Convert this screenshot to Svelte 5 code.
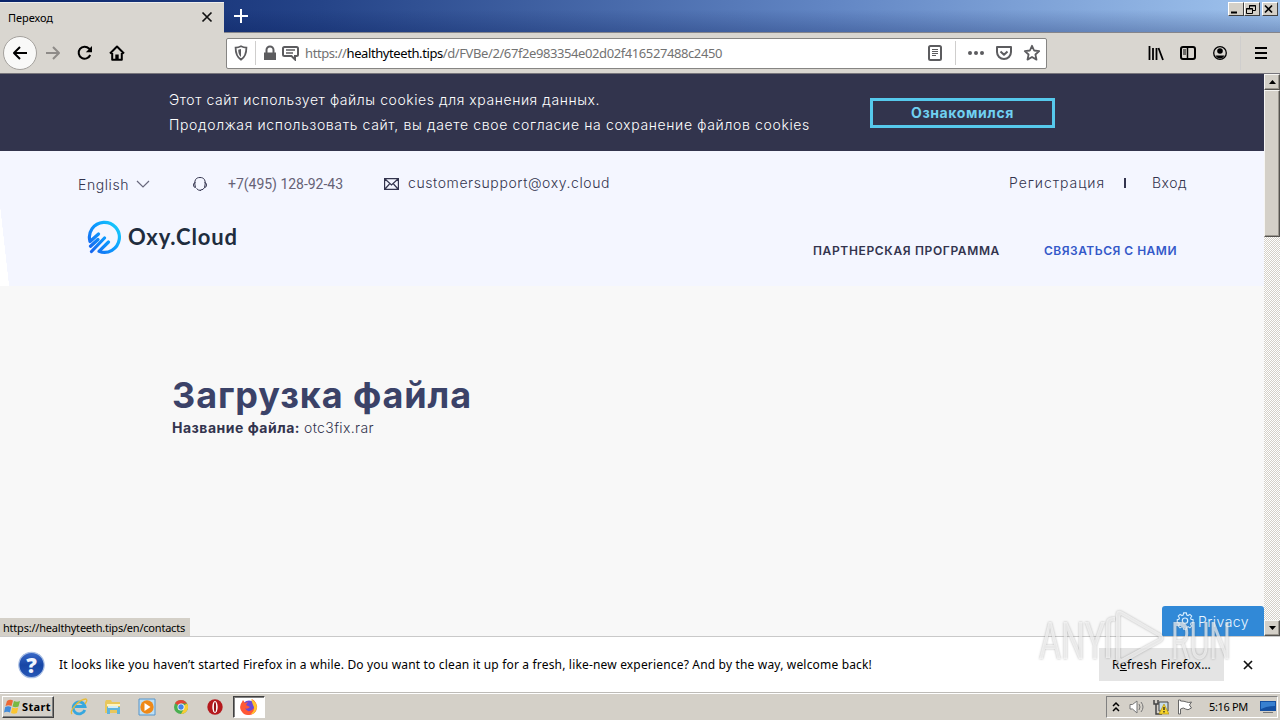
<script lang="ts">
	const url = {
		scheme: 'https://',
		host: 'healthyteeth.tips',
		path: '/d/FVBe/2/67f2e983354e02d02f416527488c2450'
	};

	// Fallback fonts run wider or narrower than Tahoma and Montserrat, so track them to a set width
	function fit(node: HTMLElement, width: number) {
		const natural = node.getBoundingClientRect().width;
		const count = (node.textContent ?? '').length;
		node.style.letterSpacing = (width - natural) / count + 'px';
	}
</script>

<div class="screen">
	<header class="tabstrip">
		<div class="tab">
			<span class="tahoma tab-title"><span use:fit={45}>Переход</span></span>
			<svg width="12" height="12" viewBox="0 0 12 12"><path d="M1.5 1.5l9 9m0-9l-9 9" stroke="#111" stroke-width="1.7" /></svg>
		</div>
		<svg class="plus" width="14" height="14" viewBox="0 0 14 14"><path d="M7 0v14M0 7h14" stroke="#fff" stroke-width="2" /></svg>
		<div class="window-buttons">
			<button aria-label="Minimize"><svg width="12" height="11"><path d="M2 8.5h6" stroke="#000" stroke-width="2" /></svg></button>
			<button aria-label="Restore"><svg width="12" height="11"><path d="M4.5 4V1.5h6v5H8M4 2h7M1.5 4.5h6v5h-6zM1 5h7" fill="none" stroke="#000" /></svg></button>
			<button class="close" aria-label="Close"><svg width="12" height="11"><path d="M2 1.5l7 7m0-7l-7 7" stroke="#000" stroke-width="1.7" /></svg></button>
		</div>
	</header>

	<div class="toolbar">
		<div class="back">
			<svg width="16" height="16" viewBox="0 0 16 16"><path d="M15 8H2M8 2L2 8l6 6" class="line" stroke="#000" /></svg>
		</div>
		<svg class="forward" width="16" height="16" viewBox="0 0 16 16"><path d="M1 8h13M8 2l6 6-6 6" class="line" stroke="#8e8b88" /></svg>
		<svg class="reload" width="16" height="16" viewBox="0 0 16 16"><path d="M13.2 10A6 6 0 1 1 12 3.5L14 5.5" class="line" stroke="#000" /><path d="M15 1v6.2H8.8z" /></svg>
		<svg class="home" width="16" height="16" viewBox="0 0 16 16"><path d="M1 8.5L8 1.5l7 7M3.2 8v6.8h9.6V8" class="line" stroke="#000" /><path d="M6.3 15V9.5h3.4V15z" /></svg>

		<div class="urlbar">
			<svg class="shield" width="14" height="16" viewBox="0 0 14 16"><path d="M7 1.3c2 1 3.6 1.3 5.4 1.3 0 5.6-1 9.6-5.4 12C2.6 12.2 1.6 8.2 1.6 2.6 3.4 2.6 5 2.3 7 1.3z" fill="none" stroke="#5c5c5f" stroke-width="1.8" /><path d="M7 4v8C5 10.5 4.3 8 4.2 4.8z" fill="#5c5c5f" /></svg>
			<i class="rule"></i>
			<svg class="lock" width="14" height="16" viewBox="0 0 14 16"><path d="M1 7.500h12V15H1z" fill="#5c5c5f" /><path d="M3.500 8V5a3.500 3.500 0 0 1 7 0v3" fill="none" stroke="#5c5c5f" stroke-width="2" /></svg>
			<svg class="bubble" width="17" height="16" viewBox="0 0 17 16"><path d="M2.500 2h12q1.500 0 1.500 1.500v6q0 1.500-1.500 1.500H13v3.500L9.500 11h-7Q1 11 1 9.500v-6Q1 2 2.500 2z" fill="none" stroke="#5c5c5f" stroke-width="2" /><path d="M4 5h9M4 8h7" stroke="#5c5c5f" stroke-width="1.300" /></svg>
			<span class="url"><span use:fit={417}>{url.scheme}<b>{url.host}</b>{url.path}</span></span>
			<svg class="reader" width="16" height="16" viewBox="0 0 16 16"><rect x="2" y="1" width="12" height="14" rx="1.500" fill="none" stroke="#5c5c5f" stroke-width="2" /><path d="M5 4.500h6M5 6.500h6M5 8.500h6M5 10.500h4" stroke="#5c5c5f" /></svg>
			<i class="rule after-reader"></i>
			<svg class="dots" width="16" height="16" viewBox="0 0 16 16" fill="#5c5c5f"><circle cx="2" cy="8" r="2" /><circle cx="8" cy="8" r="2" /><circle cx="14" cy="8" r="2" /></svg>
			<svg class="pocket" width="16" height="16" viewBox="0 0 16 16"><path d="M1 2h14v5a7 7 0 0 1-14 0zM4.500 6.500L8 9.800l3.500-3.300" class="line" stroke="#5c5c5f" /></svg>
			<svg class="star" width="18" height="18" viewBox="0 0 18 18"><path d="M9 1.800l2.100 4.700 5.100.6-3.800 3.400 1.100 5.100L9 13l-4.500 2.600 1.100-5.100-3.800-3.400 5.100-.6z" fill="none" stroke="#5c5c5f" stroke-width="1.800" stroke-linejoin="round" /></svg>
		</div>

		<div class="tools">
			<svg width="16" height="16" viewBox="0 0 16 16"><path d="M1.500 1v14M5 3v12M8.500 3v12M10.500 3l4.500 12" stroke="#000" stroke-width="1.800" /></svg>
			<svg width="16" height="16" viewBox="0 0 16 16"><rect x="1" y="2" width="14" height="12" rx="2" fill="none" stroke="#000" stroke-width="2" /><path d="M7.500 2v12" stroke="#000" stroke-width="1.500" /><path d="M3 5h3M3 7h3M3 9h3" stroke="#000" /></svg>
			<svg width="16" height="16" viewBox="0 0 16 16"><circle cx="8" cy="8" r="6.300" fill="none" stroke="#000" stroke-width="1.300" /><circle cx="8" cy="6" r="2.800" /><path d="M3.500 10.500h9Q11 13.500 8 13.500t-4.500-3z" /></svg>
			<i class="rule"></i>
			<svg width="16" height="16" viewBox="0 0 16 16"><path d="M2 3h12M2 8h12M2 13h12" stroke="#000" stroke-width="2" /></svg>
		</div>
	</div>

	<div class="viewport">
		<div class="page">
			<section class="cookies">
				<p>
					<span use:fit={431}>Этот сайт использует файлы cookies для хранения данных.</span><br />
					<span use:fit={641}>Продолжая использовать сайт, вы даете свое согласие на сохранение файлов cookies</span>
				</p>
				<button><span use:fit={103}>Ознакомился</span></button>
			</section>

			<section class="site-header">
				<div class="contacts">
					<span class="language" use:fit={51}>English</span>
					<svg class="chevron" width="14" height="8" viewBox="0 0 14 8"><path d="M1 1l6 6 6-6" fill="none" stroke="#68687c" stroke-width="1.200" /></svg>
					<svg class="headset" width="16" height="16" viewBox="0 0 16 16" fill="none" stroke="#33344e"><path d="M3.500 11.500C1.500 4 4 1.500 8 1.500s6.500 2.500 4.500 10M3.500 6.500Q1.500 6.500 1.500 9t2 2.500M12.500 6.500q2 0 2 2.500t-2 2.500q-1 2.500-4 2.500M4.500 12.500Q6 14.500 9 14.500" /></svg>
					<span class="phone"><span use:fit={115}>+7(495) 128-92-43</span></span>
					<svg class="mail" width="15" height="12" viewBox="0 0 15 12" fill="none" stroke="#33344e" stroke-width="1.200"><path d="M.6.6h13.800v10.800H.6zM1 1l6.500 6L14 1M1 11l4.500-5M14 11L9.500 6" /></svg>
					<span class="email"><span use:fit={202}>customersupport@oxy.cloud</span></span>
					<span class="register"><span use:fit={96}>Регистрация</span></span>
					<i></i>
					<span class="login"><span use:fit={35}>Вход</span></span>
				</div>
				<div class="brand-row">
					<svg class="logo" width="36" height="36" viewBox="0 0 36 36" fill="none" stroke="url(#oxy)" stroke-width="3.200" stroke-linecap="round" stroke-linejoin="round">
						<defs>
							<linearGradient id="oxy" x1="4" y1="28" x2="32" y2="6" gradientUnits="userSpaceOnUse">
								<stop offset="0" stop-color="#1768ef" />
								<stop offset=".55" stop-color="#0b9cff" />
								<stop offset="1" stop-color="#18c9fa" />
							</linearGradient>
						</defs>
						<path d="M13.500 15L5 22.500A15 15 0 1 1 14 32.300L23.500 23M5.500 27.300L13 20.500M6.500 32.500L19.500 19" />
					</svg>
					<strong><span use:fit={110}>Oxy.Cloud</span></strong>
					<nav>
						<a href="#partners"><span use:fit={187}>ПАРТНЕРСКАЯ ПРОГРАММА</span></a>
						<a href="#contacts" class="active"><span use:fit={133}>СВЯЗАТЬСЯ С НАМИ</span></a>
					</nav>
				</div>
			</section>

			<main>
				<h1><span use:fit={300}>Загрузка файла</span></h1>
				<p><b use:fit={128}>Название файла:</b><span class="file"><span use:fit={70}>otc3fix.rar</span></span></p>
			</main>

			<div class="status tahoma"><span use:fit={182}>https://healthyteeth.tips/en/contacts</span></div>
			<div class="privacy">
				<svg width="18" height="18" viewBox="0 0 18 18" fill="none" stroke="#d9efff" stroke-width="1.200"><path d="M7.500 1h3l.5 2.300 1.400.6 2-1.300 2 2-1.300 2 .6 1.400 2.200.5v3l-2.200.5-.6 1.400 1.300 2-2 2-2-1.300-1.400.6-.5 2.200h-3L7 16.700l-1.400-.6-2 1.300-2-2 1.300-2-.6-1.400L.5 11.500v-3L2.300 8l.6-1.400-1.300-2 2-2 2 1.300L7 3.300z" transform="translate(.8 0) scale(.91)" /><circle cx="9" cy="8.700" r="2.700" /></svg>
				<span use:fit={51}>Privacy</span>
			</div>
		</div>
		<div class="scrollbar">
			<div class="scroll-button"><svg width="7" height="4"><path d="M0 4h7L3.500 0z" /></svg></div>
			<div class="thumb"></div>
			<div class="scroll-button down"><svg width="7" height="4"><path d="M0 0h7L3.500 4z" /></svg></div>
		</div>
	</div>

	<div class="notification tahoma">
		<svg width="28" height="28" viewBox="0 0 28 28">
			<defs><linearGradient id="help" x2="0" y2="1"><stop stop-color="#3b6ac9" /><stop offset=".5" stop-color="#1746a5" /><stop offset="1" stop-color="#2858b8" /></linearGradient></defs>
			<circle cx="13.500" cy="14" r="12.700" fill="url(#help)" stroke="#a9bfe4" stroke-width="1.200" />
			<text x="13.500" y="21.500" text-anchor="middle" font-family="Open Sans, sans-serif" font-size="21" font-weight="800" fill="#f1f5ff">?</text>
		</svg>
		<span class="message"><span use:fit={813}>It looks like you haven’t started Firefox in a while. Do you want to clean it up for a fresh, like-new experience? And by the way, welcome back!</span></span>
		<button><span use:fit={99}>R<u>e</u>fresh Firefox…</span></button>
		<svg class="dismiss" width="10" height="10"><path d="M1 1l8 8m0-8l-8 8" stroke="#111" stroke-width="1.700" /></svg>
	</div>

	<footer class="taskbar tahoma">
		<button class="start">
			<svg width="17" height="17" viewBox="0 0 17 17"><path d="M3 3q3-2 6-.5L7.500 8Q4.500 6.500 1.500 8z" fill="#ed6834" /><path d="M10 3q3 1.500 6 0l-1.500 5.500q-3 1.500-6 0z" fill="#78b943" /><path d="M1.200 9q3-1.500 6 0L6 14.500q-3-1.500-6 0z" fill="#438cda" /><path d="M8.200 9.500q3 1.500 6 0L13 15q-3 1.500-6 0z" fill="#fbc531" /></svg>
			<b use:fit={29}>Start</b>
		</button>
		<div class="apps">
			<svg width="18" height="18" viewBox="0 0 18 18"><path d="M14.800 12A6 6 0 1 1 15 8.500H5" fill="none" stroke="#36a7df" stroke-width="2.800" /><path d="M2 16C-1 13 9 1 16 1q2 1-1 5" fill="none" stroke="#e6bb38" stroke-width="1.300" /></svg>
			<svg width="18" height="18" viewBox="0 0 18 18"><path d="M1 4l1-2h5l1 2h8v11H1z" fill="#e9c75c" /><path d="M3 6h13v2H3z" fill="#fff4be" /><path d="M3 9h13v7h-3v-4H6v4H3z" fill="#5fb4dc" /><path d="M4 8h10v2H4z" fill="#d2edf7" /></svg>
			<svg width="18" height="18" viewBox="0 0 18 18"><path d="M1 1h16v16H1z" fill="#bddff5" stroke="#5794c9" /><circle cx="9" cy="9" r="6.700" fill="#ef8918" /><path d="M6.500 5v8l6-4z" fill="#fff" /></svg>
			<svg width="18" height="18" viewBox="0 0 18 18"><circle cx="9" cy="9" r="7" fill="#4aaf50" /><path d="M9 9L3 5.300A7 7 0 0 1 15.100 5.500H9z" fill="#e34436" /><path d="M9 9l6.100-3.500A7 7 0 0 1 9 16l3-5.200z" fill="#f9cc34" /><circle cx="9" cy="9" r="3.500" fill="#fff" /><circle cx="9" cy="9" r="2.700" fill="#4385e8" /></svg>
			<svg width="18" height="18" viewBox="0 0 18 18"><circle cx="9" cy="9" r="7.700" fill="#b5191d" /><ellipse cx="9" cy="9" rx="2.700" ry="6" fill="#fff" /><ellipse cx="9" cy="9" rx="1.100" ry="5" fill="#961115" /></svg>
			<div class="running"><svg width="18" height="18" viewBox="0 0 18 18"><circle cx="9" cy="9.500" r="7" fill="#6949d8" /><path d="M9 17A8 8 0 0 1 2 4l1-2 2 3 3-1-2 3 4 2q-3 3-5 1 2 5 7 2 4-3 1-7l-1-4q6 4 5 9a8 8 0 0 1-8 7z" fill="#ff5836" /><path d="M11 1q6 3 6 9-2 6-6 6 5-4 2-9z" fill="#ffc52e" /></svg></div>
		</div>
		<div class="tray">
			<svg width="8" height="12" viewBox="0 0 8 12"><path d="M1 5l3-3 3 3M1 10l3-3 3 3" fill="none" stroke="#000" stroke-width="1.500" /></svg>
			<svg width="16" height="16" viewBox="0 0 16 16"><path d="M1 5.500h2.500L8 2v12l-4.500-4H1z" fill="#fff" stroke="#777" /><path d="M10 5q2 3 0 6M12 3q4 5 0 10" fill="none" stroke="#777" /></svg>
			<svg width="16" height="16" viewBox="0 0 16 16"><path d="M6 3h9v9H6z" fill="#c8dce8" stroke="#444" /><path d="M1 1v4h4V1M3 5v10h6" fill="none" stroke="#444" stroke-width="1.500" /><path d="M11 5l5 10H6z" fill="#f7d42b" stroke="#a88600" stroke-width=".6" /><path d="M11 8v3m0 1v1.500" stroke="#222" stroke-width="1.300" /></svg>
			<svg width="16" height="16" viewBox="0 0 16 16"><path d="M1.500 1v14h2v-5q3-2 5 0t6-1l-2-3 2-3q-3 1-5 0t-6-1V1z" fill="#fff" stroke="#666" /></svg>
			<span class="clock"><span use:fit={39}>5:16 PM</span></span>
			<svg class="desktop" width="16" height="14" viewBox="0 0 16 14"><path d="M0 1h16v10H0z" fill="#1550a1" /><path d="M1 2h14v4q-8 0-14 3z" fill="#3880d0" /><path d="M3 12h10v1H3z" fill="#777" /></svg>
		</div>
	</footer>

	<svg class="watermark" width="200" height="60" viewBox="0 0 200 60">
		<g fill="#fff" fill-opacity=".65" font-family="Roboto, sans-serif" font-size="51">
			<text x="2" y="51" textLength="66" lengthAdjust="spacingAndGlyphs">ANY</text>
			<text x="134" y="51" textLength="60" lengthAdjust="spacingAndGlyphs">RUN</text>
			<path d="M69 50V16q0-8 9-7v4q-5-1-5 4v33zM79 8q0-8 7-4l38 22q5 4 0 8L86 55q-7 3-7-5zm4 1v40q0 3 3 1l35-19q2-1 0-3L86 8q-3-2-3 1z" />
		</g>
	</svg>
</div>

<style>
	:global(body) {
		overflow: hidden;
	}

	.screen {
		position: relative;
		width: 1280px;
		height: 720px;
		font-family: Inter, 'Open Sans', sans-serif;
		color: #33344e;
		overflow: hidden;
	}

	.screen * {
		box-sizing: border-box;
		white-space: nowrap;
	}

	svg {
		display: block;
		flex: none;
	}

	button {
		padding: 0;
		font: inherit;
		color: inherit;
	}

	p, h1 {
		margin: 0;
	}

	.tahoma {
		font-family: 'Noto Sans', sans-serif;
		color: #000;
	}

	.line {
		fill: none;
		stroke-width: 2;
		stroke-linejoin: round;
	}

	.tabstrip {
		display: flex;
		height: 33px;
		background: linear-gradient(to bottom, rgba(0, 20, 80, 0) 30%, rgba(0, 20, 80, .25)), linear-gradient(90deg, #0a246a 0, #254488 25%, #6286c4 65%, #a0c4ee);
		border-bottom: 1px solid #85858b;
	}

	.tab {
		display: flex;
		align-items: center;
		justify-content: space-between;
		width: 224px;
		height: 31px;
		margin-top: 2px;
		padding: 0 11px 2px 8px;
		background: #d9d6d0;
		border-top: 1px solid #efeeec;
		box-shadow: 0 1px #d9d6d0;
	}

	.tab-title {
		font-size: 11px;
	}

	.plus {
		margin: 9px 0 0 10px;
	}

	.window-buttons {
		display: flex;
		margin: 2px 2px 0 auto;
	}

	.window-buttons button {
		width: 16px;
		height: 14px;
		background: #d4d0c8;
		border: 1px solid;
		border-color: #fff #404040 #404040 #fff;
	}

	.window-buttons .close {
		margin-left: 2px;
	}

	.toolbar {
		display: flex;
		align-items: center;
		height: 41px;
		padding: 0 11px 0 3px;
		background: #d9d6d0;
		border-bottom: 1px solid #77757b;
	}

	.back {
		display: grid;
		place-items: center;
		width: 34px;
		height: 34px;
		background: #f9f9f8;
		border: 1px solid #a4a19d;
		border-radius: 50%;
	}

	.forward {
		margin-left: 8px;
	}

	.reload,
	.home {
		margin-left: 16px;
	}

	.urlbar {
		display: flex;
		align-items: center;
		width: 821px;
		height: 31px;
		margin-left: 101px;
		padding: 0 5px 0 7px;
		background: #fff;
		border: 1px solid #868583;
		border-radius: 2px;
	}

	.rule {
		flex: none;
		width: 1px;
		height: 24px;
		background: #cfcecd;
	}

	.urlbar .rule {
		margin: 0 7px;
	}

	.urlbar .after-reader {
		margin-left: 12px;
	}

	.bubble {
		margin-left: 5px;
	}

	.url {
		flex: 1;
		padding-left: 6px;
		font: 13px 'Noto Sans', sans-serif;
		color: #727272;
	}

	.url b {
		font-weight: 400;
		color: #000;
	}

	.dots {
		margin-left: 5px;
	}

	.pocket {
		margin-left: 12px;
	}

	.star {
		margin-left: 11px;
	}

	.tools {
		display: flex;
		align-items: center;
		gap: 16px;
		margin-left: auto;
	}

	.tools .rule {
		height: 34px;
		margin: 0 -4px;
	}

	.viewport {
		display: flex;
		height: 562px;
	}

	.page {
		position: relative;
		width: 1264px;
		background: #f8f8f8;
	}

	.cookies {
		display: flex;
		height: 77px;
		padding: 13px 209px 0 169px;
		justify-content: space-between;
		background: #32344d;
		color: #fff;
		font-size: 14px;
		font-weight: 300;
		line-height: 25px;
	}

	.cookies button {
		width: 185px;
		height: 30px;
		margin-top: 11px;
		background: transparent;
		border: 3px solid #56c9ec;
		color: #70d0f1;
		font-weight: 700;
		line-height: 22px;
	}

	.site-header {
		height: 135px;
		/* white sliver left of the slanted edge */
		background: linear-gradient(to top right, #fff 50%, #f4f6ff 51%) 0 100% / 9px 80px no-repeat, #f4f6ff;
	}

	.contacts {
		display: flex;
		align-items: center;
		height: 66px;
		padding-left: 78px;
		font-size: 14px;
		font-weight: 300;
	}

	.chevron {
		margin-left: 7px;
	}

	.headset {
		margin-left: 42px;
	}

	.phone {
		width: 176px;
		padding-left: 20px;
		font: 14px Roboto, sans-serif;
		color: #666276;
	}

	.email {
		width: 601px;
		margin: -3px 0 0 9px;
		font-size: 14px;
	}

	.register {
		width: 96px;
		margin-top: -3px;
	}

	.login {
		margin-top: -3px;
	}

	.contacts i {
		width: 2px;
		height: 10px;
		margin: -3px 26px 0 19px;
		background: #33344e;
	}

	.brand-row {
		display: flex;
		height: 69px;
		padding: 2px 87px 0 85px;
	}

	.brand-row strong {
		margin-left: 7px;
		font: 700 22px/35px Lato, sans-serif;
		color: #202c3d;
	}

	nav {
		display: flex;
		gap: 44px;
		margin: 22px 0 0 auto;
		font-size: 12px;
		font-weight: 600;
		line-height: 19px;
	}

	nav a {
		color: #33344e;
		text-decoration: none;
	}

	nav .active {
		color: #3459c9;
	}

	main {
		padding: 86px 0 0 172px;
		font-size: 14px;
		line-height: 20px;
	}

	h1 {
		height: 46px;
		font-size: 36px;
		font-weight: 700;
		line-height: 46px;
		color: #3b4268;
	}

	.file {
		margin-left: 4px;
		font-weight: 300;
	}

	.status {
		position: absolute;
		left: 0;
		bottom: 0;
		width: 190px;
		height: 18px;
		padding-left: 3px;
		background: #d4d0c8;
		font-size: 11px;
		line-height: 19px;
	}

	.privacy {
		position: absolute;
		right: 0;
		bottom: 0;
		display: flex;
		align-items: center;
		gap: 4px;
		width: 102px;
		height: 30px;
		padding-left: 14px;
		background: #3189d7;
		border-radius: 3px 3px 0 0;
		color: #eaf6ff;
		font-size: 14px;
		font-weight: 300;
	}

	.scrollbar {
		display: flex;
		flex-direction: column;
		width: 16px;
		background: repeating-conic-gradient(#d4d0c8 0 25%, #fff 0 50%) 0 0 / 2px 2px;
	}

	.scroll-button,
	.thumb {
		background: #d4d0c8;
		border: 1px solid;
		border-color: #f6f5f2 #55534f #55534f #f6f5f2;
		box-shadow: inset -1px -1px #9c9890;
	}

	.scroll-button {
		display: grid;
		place-items: center;
		height: 16px;
	}

	.thumb {
		height: 147px;
	}

	.down {
		margin-top: auto;
	}

	.notification {
		display: flex;
		align-items: center;
		height: 57px;
		padding: 0 27px 0 18px;
		background: #fff;
		border-top: 1px solid #c9c9c9;
		border-bottom: 1px solid #bdbbb7;
		font-size: 12px;
	}

	.message {
		margin-left: 13px;
	}

	.notification button {
		width: 125px;
		height: 33px;
		margin-left: auto;
		background: #e4e4e4;
		border: 0;
	}

	.dismiss {
		margin-left: 19px;
	}

	.taskbar {
		display: flex;
		align-items: center;
		height: 27px;
		padding: 0 2px 1px;
		background: #d4d0c8;
		border-top: 1px solid #fff;
		font-size: 11px;
	}

	.start {
		display: flex;
		align-items: center;
		gap: 1px;
		width: 52px;
		height: 22px;
		padding-left: 1px;
		background: #d4d0c8;
		border: 1px solid;
		border-color: #fff #404040 #404040 #fff;
		box-shadow: inset -1px -1px #808080;
	}

	.apps {
		display: flex;
		align-items: center;
		gap: 16px;
		margin-left: 16px;
	}

	.running {
		display: grid;
		place-items: center;
		width: 32px;
		height: 22px;
		margin-left: -7px;
		background: #fff;
		border: 1px solid;
		border-color: #404040 #fff #fff #404040;
		box-shadow: inset 1px 1px #808080;
	}

	.tray {
		display: flex;
		align-items: center;
		width: 172px;
		height: 22px;
		margin-left: auto;
		padding-left: 5px;
		gap: 8px;
		border: 1px solid;
		border-color: #808080 #fff #fff #808080;
	}

	.tray svg:first-child {
		margin-right: 1px;
	}

	.clock {
		width: 39px;
		margin-left: 8px;
	}

	.desktop {
		margin-left: 4px;
	}

	.watermark {
		position: absolute;
		left: 1037px;
		top: 608px;
		overflow: visible;
		filter: drop-shadow(0 0 1px rgba(90, 90, 90, .65));
	}
</style>
